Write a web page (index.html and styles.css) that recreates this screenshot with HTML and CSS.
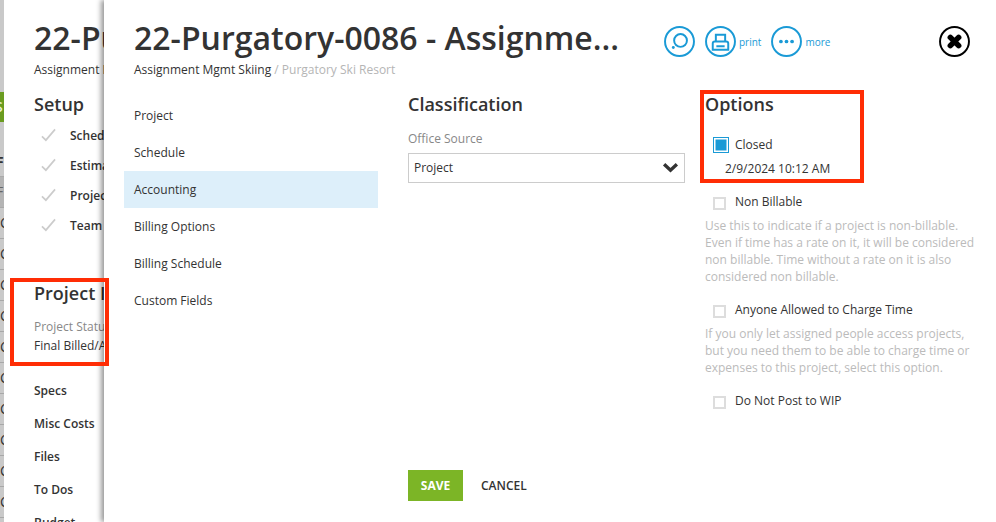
FILE: index.html
```html
<!DOCTYPE html>
<html lang="en">
<head>
<meta charset="utf-8">
<title>22-Purgatory-0086 - Assignment Mgmt Skiing</title>
<link rel="stylesheet" href="styles.css">
</head>
<body>
<div class="app">
  <div class="strip">
    <div class="strip-green">S</div>
    <div class="strip-head">F</div>
    <div class="strip-row strip-row-dark">F</div>
    <div class="strip-row">C</div>
    <div class="strip-row">C</div>
    <div class="strip-row">C</div>
    <div class="strip-row">C</div>
    <div class="strip-row">C</div>
    <div class="strip-row">C</div>
    <div class="strip-row">C</div>
    <div class="strip-row">C</div>
    <div class="strip-row">C</div>
    <div class="strip-row">C</div>
    <div class="strip-row">C</div>
  </div>

  <aside class="back">
    <div class="back-inner">
      <div class="back-title">22-Purgatory-0086</div>
      <div class="back-sub">Assignment Mgmt Skiing</div>
      <div class="back-h">Setup</div>
      <ul class="setup">
        <li><svg class="tick" viewBox="0 0 16 14"><path d="M1 8.5 5.2 12.5 15 1"/></svg>Schedule</li>
        <li><svg class="tick" viewBox="0 0 16 14"><path d="M1 8.5 5.2 12.5 15 1"/></svg>Estimate</li>
        <li><svg class="tick" viewBox="0 0 16 14"><path d="M1 8.5 5.2 12.5 15 1"/></svg>Project</li>
        <li><svg class="tick" viewBox="0 0 16 14"><path d="M1 8.5 5.2 12.5 15 1"/></svg>Team</li>
      </ul>
      <div class="back-h back-h-project">Project Info</div>
      <div class="back-label">Project Status</div>
      <div class="back-value">Final Billed/Archived</div>
      <ul class="back-links">
        <li>Specs</li>
        <li>Misc Costs</li>
        <li>Files</li>
        <li>To Dos</li>
        <li>Budget</li>
      </ul>
    </div>
  </aside>

  <main class="front">
    <header class="head">
      <div class="head-text">
        <h1 class="title">22-Purgatory-0086 - Assignme...</h1>
        <div class="crumb">Assignment Mgmt Skiing <span class="crumb-muted">/ Purgatory Ski Resort</span></div>
      </div>
      <div class="tools">
        <span class="tool">
          <svg class="round" viewBox="0 0 30 30"><circle cx="15" cy="15" r="14" class="ring"/><circle cx="16" cy="14" r="6.2" class="ln"/><circle cx="9" cy="20.8" r="1.4" class="dot"/></svg>
        </span>
        <span class="tool">
          <svg class="round" viewBox="0 0 30 30"><circle cx="15" cy="15" r="14" class="ring"/><path class="ln" d="M10.5 15V8.5h9V15M9.5 15h11a2 2 0 0 1 2 2v6h-15v-6a2 2 0 0 1 2-2ZM11 19.5h8"/></svg>
          <span class="tool-label">print</span>
        </span>
        <span class="tool">
          <svg class="round" viewBox="0 0 30 30"><circle cx="15" cy="15" r="14" class="ring"/><circle cx="9.6" cy="15" r="1.8" class="dot"/><circle cx="15" cy="15" r="1.8" class="dot"/><circle cx="20.4" cy="15" r="1.8" class="dot"/></svg>
          <span class="tool-label">more</span>
        </span>
      </div>
      <svg class="close" viewBox="0 0 30 30"><circle cx="15" cy="15" r="14" class="close-ring"/><path class="close-x" d="M11 11 19 19M19 11 11 19"/></svg>
    </header>

    <div class="body">
      <nav class="nav">
        <div class="nav-item">Project</div>
        <div class="nav-item">Schedule</div>
        <div class="nav-item nav-active">Accounting</div>
        <div class="nav-item">Billing Options</div>
        <div class="nav-item">Billing Schedule</div>
        <div class="nav-item">Custom Fields</div>
      </nav>

      <section class="classification">
        <h2 class="h2">Classification</h2>
        <div class="field-label">Office Source</div>
        <div class="select">Project
          <svg class="chev" viewBox="0 0 16 10"><path d="M2 2 8 7.5 14 2"/></svg>
        </div>
      </section>

      <section class="options">
        <h2 class="h2">Options</h2>
        <div class="opt opt-closed"><span class="check check-on"></span>Closed</div>
        <div class="closed-date">2/9/2024 10:12 AM</div>
        <div class="opt opt-nb"><span class="check"></span>Non Billable</div>
        <p class="help">Use this to indicate if a project is non-billable. Even if time has a rate on it, it will be considered non billable. Time without a rate on it is also considered non billable.</p>
        <div class="opt opt-next"><span class="check"></span>Anyone Allowed to Charge Time</div>
        <p class="help">If you only let assigned people access projects, but you need them to be able to charge time or expenses to this project, select this option.</p>
        <div class="opt opt-next"><span class="check"></span>Do Not Post to WIP</div>
      </section>
    </div>

    <footer class="foot">
      <button class="save" type="button">SAVE</button>
      <button class="cancel" type="button">CANCEL</button>
    </footer>
  </main>

  <div class="mark mark-left"></div>
  <div class="mark mark-right"></div>
</div>
</body>
</html>
```
FILE: styles.css
```css
* { box-sizing: border-box; }
html, body { margin: 0; padding: 0; height: 100%; overflow: hidden; }
body { font-family: "Open Sans", sans-serif; color: #333; background: #fff; }

.app { position: relative; display: flex; width: 996px; height: 522px; overflow: hidden; }

/* page peeking out at the far left */
.strip { width: 4px; flex: none; background: #c9c9c9; overflow: hidden; padding-top: 92px; font-size: 14px; line-height: 30px; color: #333; }
.strip-green { height: 30px; background: #6a9c20; color: #e8f0d8; font-weight: 600; margin-bottom: 24px; text-indent: -5px; }
.strip-head { height: 31px; font-weight: 700; text-indent: -4px; line-height: 32px; border-bottom: 1px solid #aaa; }
.strip-row { height: 31px; border-bottom: 1px solid #a8a8a8; line-height: 30px; }
.strip-row-dark { background: #b4b4b4; color: #666; text-indent: -4px; }

/* panel behind */
.back { width: 100px; flex: none; background: #fff; overflow: hidden; }
.back-inner { width: 400px; padding: 16px 0 0 30px; }
.back-title { font-size: 32px; line-height: 44px; font-weight: 600; white-space: nowrap; }
.back-sub { font-size: 12px; line-height: 18px; margin-top: 1px; white-space: nowrap; }
.back-h { font-size: 18px; line-height: 24px; font-weight: 600; white-space: nowrap; }
.back-sub + .back-h { margin-top: 13px; }
.setup { list-style: none; margin: 4px 0 0; padding: 0; }
.setup li { height: 30px; display: flex; align-items: center; font-size: 12px; font-weight: 600; white-space: nowrap; margin-left: 7px; }
.tick { width: 15px; height: 14px; margin-right: 14px; fill: none; stroke: #ccc; stroke-width: 1.8; }
.back-h-project { margin-top: 41px; }
.back-label { font-size: 12px; line-height: 18px; color: #888; margin-top: 13px; white-space: nowrap; }
.back-value { font-size: 12px; line-height: 18px; margin-top: 1px; white-space: nowrap; }
.back-links { list-style: none; margin: 27px 0 0; padding: 0; }
.back-links li { font-size: 12px; font-weight: 600; line-height: 18px; margin-bottom: 15px; }

/* front panel */
.front { flex: 1; position: relative; background: #fff; box-shadow: -3px 0 5px rgba(0,0,0,.4); display: flex; flex-direction: column; }
.head { display: flex; align-items: flex-start; height: 94px; padding: 16px 0 0 30px; }
.head-text { width: 500px; flex: none; }
.title { margin: 0; font-size: 32px; line-height: 44px; font-weight: 600; white-space: nowrap; }
.crumb { font-size: 12px; line-height: 18px; margin-top: 1px; }
.crumb-muted { color: #b5b5b5; }
.tools { display: flex; align-items: center; gap: 10px; margin-left: 30px; margin-top: 10px; }
.tool { display: flex; align-items: center; gap: 3px; }
.round { width: 31px; height: 31px; }
.ring { fill: none; stroke: #1a9ad6; stroke-width: 1.9; }
.ln { fill: none; stroke: #1a9ad6; stroke-width: 1.9; }
.dot { fill: #1a9ad6; }
.tool-label { font-size: 10px; color: #1a9ad6; }
.close { width: 31px; height: 31px; margin-left: auto; margin-right: 26px; margin-top: 10px; flex: none; }
.close-ring { fill: none; stroke: #000; stroke-width: 1.9; }
.close-x { fill: none; stroke: #000; stroke-width: 5.4; stroke-linecap: round; }

.body { display: flex; flex: 1; min-height: 0; }
.nav { width: 254px; flex: none; margin-left: 20px; padding-top: 3px; }
.nav-item { height: 37px; padding-left: 10px; display: flex; align-items: center; font-size: 12px; }
.nav-active { background: #ddeffa; }

.classification { width: 277px; margin-left: 30px; flex: none; }
.h2 { margin: 0; font-size: 18px; line-height: 20px; font-weight: 600; }
.field-label { font-size: 12px; line-height: 18px; color: #888; margin-top: 16px; }
.select { position: relative; height: 30px; margin-top: 5px; border: 1px solid #ccc; padding-left: 5px; font-size: 12px; line-height: 27px; }
.chev { position: absolute; right: 5px; top: 8px; width: 17px; height: 11px; fill: none; stroke: #333; stroke-width: 3.2; }

.options { margin-left: 20px; width: 272px; flex: none; }
.opt { display: flex; align-items: center; font-size: 12px; line-height: 18px; padding-left: 8px; }
.check { width: 13px; height: 13px; border: 2px solid #ddd; flex: none; margin-right: 9px; margin-top: 3px; }
.check-on { width: 16px; height: 16px; border: 1.5px solid #1a9ad6; margin-right: 6px; margin-top: 0; background: #1a9ad6; box-shadow: inset 0 0 0 1.5px #fff; }
.opt-closed { margin-top: 22px; }
.closed-date { font-size: 12px; line-height: 18px; padding-left: 20px; margin-top: 6px; }
.opt-nb { margin-top: 15px; }
.help { margin: 6px 0 0; font-size: 12px; line-height: 17px; color: #bbb; }
.opt-next { margin-top: 16px; }

.foot { display: flex; align-items: center; height: 52px; padding: 0 0 21px 304px; flex: none; gap: 18px; }
.save { width: 55px; height: 31px; border: 0; background: #7cb526; color: #fff; font: 700 12px "Open Sans", sans-serif; padding: 0; }
.cancel { border: 0; background: none; color: #333; font: 600 12px "Open Sans", sans-serif; padding: 0; }

/* annotation rectangles drawn over the screenshot */
.mark { position: absolute; border: 4px solid #ff2d05; pointer-events: none; }
.mark-left { left: 10px; top: 278px; width: 99px; height: 88px; }
.mark-right { left: 700px; top: 90px; width: 164px; height: 93px; }
```
